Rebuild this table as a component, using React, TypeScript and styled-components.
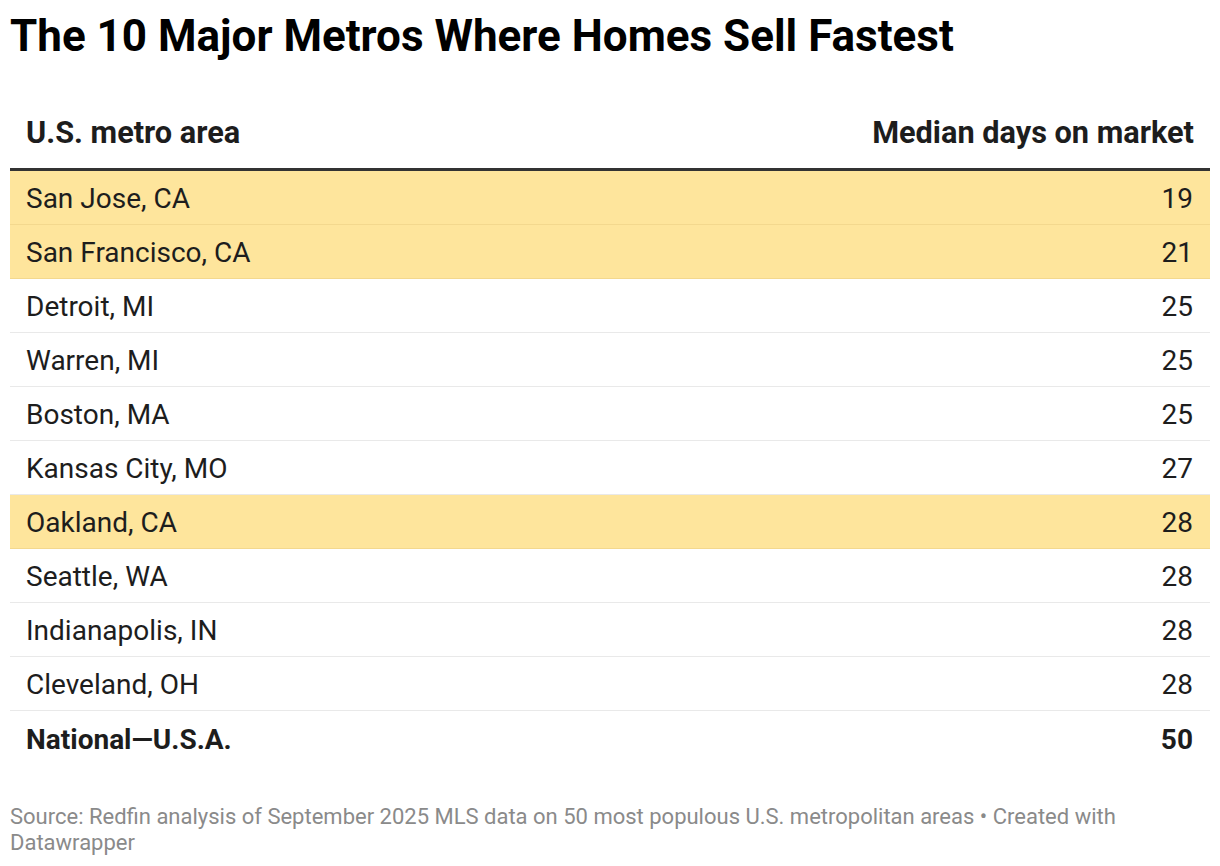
import React from 'react';
import styled, { createGlobalStyle } from 'styled-components';

const GlobalStyle = createGlobalStyle`
  body {
    margin: 0;
    background: #ffffff;
    font-family: Roboto, "Liberation Sans", sans-serif;
    color: #1d1d1d;
  }
`;

const Page = styled.div`
  padding: 10px 10px 0 10px;
  width: 1200px;
`;

const Title = styled.h1`
  margin: 0;
  font-size: 44px;
  line-height: 52px;
  font-weight: 700;
  color: #000;
`;

const Table = styled.div`
  margin-top: 54px;
  display: flex;
  flex-direction: column;
`;

const HeadRow = styled.div`
  display: flex;
  justify-content: space-between;
  align-items: center;
  padding: 0 16px 18px 16px;
  border-bottom: 3px solid #333333;
  font-size: 30.7px;
  font-weight: 700;
  line-height: 34px;
  color: #1d1d1d;
`;

const Row = styled.div<{ $hl?: boolean; $bold?: boolean; $last?: boolean }>`
  display: flex;
  justify-content: space-between;
  align-items: center;
  height: 54px;
  box-sizing: border-box;
  padding: 2px 17px 0 16px;
  font-size: 28px;
  font-weight: ${(p) => (p.$bold ? 700 : 400)};
  background: ${(p) => (p.$hl ? '#fee59c' : 'transparent')};
  border-bottom: ${(p) =>
    p.$last ? 'none' : p.$hl ? '1px solid #f3d88e' : '1px solid #e9e9e9'};
`;

const Footer = styled.p`
  margin: 39px 0 0 0;
  font-size: 22px;
  line-height: 26px;
  color: #8a8a8a;
`;

const rows = [
  { name: 'San Jose, CA', days: 19, hl: true },
  { name: 'San Francisco, CA', days: 21, hl: true },
  { name: 'Detroit, MI', days: 25 },
  { name: 'Warren, MI', days: 25 },
  { name: 'Boston, MA', days: 25 },
  { name: 'Kansas City, MO', days: 27 },
  { name: 'Oakland, CA', days: 28, hl: true },
  { name: 'Seattle, WA', days: 28 },
  { name: 'Indianapolis, IN', days: 28 },
  { name: 'Cleveland, OH', days: 28 },
];

const App = () => {
  return (
    <Page>
      <GlobalStyle />
      <Title>The 10 Major Metros Where Homes Sell Fastest</Title>
      <Table>
        <HeadRow>
          <span>U.S. metro area</span>
          <span>Median days on market</span>
        </HeadRow>
        {rows.map((r) => (
          <Row key={r.name} $hl={r.hl}>
            <span>{r.name}</span>
            <span>{r.days}</span>
          </Row>
        ))}
        <Row $bold $last>
          <span>National—U.S.A.</span>
          <span>50</span>
        </Row>
      </Table>
      <Footer>
        Source: Redfin analysis of September 2025 MLS data on 50 most populous U.S. metropolitan areas • Created with Datawrapper
      </Footer>
    </Page>
  );
};

export default App;
